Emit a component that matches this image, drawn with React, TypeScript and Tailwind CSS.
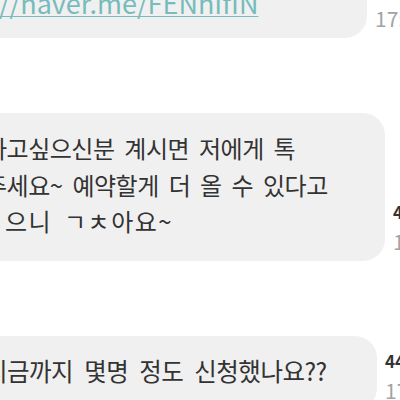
import React from "react";

type Msg = {
  lines: React.ReactNode[];
  box: string;
  count: string;
  time: string;
};

const font = { fontFamily: '"Noto Sans CJK KR", "Noto Sans", sans-serif' };

function Bubble({ msg }: { msg: Msg }) {
  return (
    <div className="flex items-end">
      <div className={`-ml-[40px] shrink-0 rounded-[22px] bg-[#f0f0f0] pl-[25px] pt-[17px] ${msg.box}`}>
        {msg.lines.map((l, i) => (
          <div
            key={i}
            className="whitespace-nowrap text-[24px] leading-[36.5px] tracking-[-0.5px] text-[#333333] [word-spacing:5px]"
          >
            {l}
          </div>
        ))}
      </div>
      <div className="ml-2 flex shrink-0 flex-col pb-[8px]">
        <span className="text-[17px] font-bold leading-[35px] text-[#333]">{msg.count}</span>
        <span className="text-[21px] leading-[24px] text-[#a3a3a3]">{msg.time}</span>
      </div>
    </div>
  );
}

export default function App() {
  const messages: Msg[] = [
    {
      box: "w-[407px] pb-[16px]",
      count: "",
      time: "17:40",
      lines: [
        <a className="-ml-[59px] text-[27px] tracking-normal text-[#77bcbc] underline decoration-1 underline-offset-2">
          https://naver.me/FENhIfIN
        </a>,
      ],
    },
    {
      box: "w-[425px] pb-[21px]",
      count: "44",
      time: "17:41",
      lines: [
        "하고싶으신분 계시면 저에게 톡",
        "주세요~ 예약할게 더 올 수 있다고",
        <span className="pl-[20px] tracking-[1.5px]">으니 ㄱㅊ아요~</span>,
      ],
    },
    {
      box: "w-[417px] pb-[21px]",
      count: "44",
      time: "17:42",
      lines: [
        <span className="text-[24.5px] [word-spacing:6px]">지금까지 몇명 정도 신청했나요??</span>,
      ],
    },
  ];

  return (
    <div className="h-[400px] w-[400px] overflow-hidden bg-white" style={font}>
      <div className="-mt-[32.5px] flex flex-col gap-[75px]">
        {messages.map((m, i) => (
          <Bubble key={i} msg={m} />
        ))}
      </div>
    </div>
  );
}
